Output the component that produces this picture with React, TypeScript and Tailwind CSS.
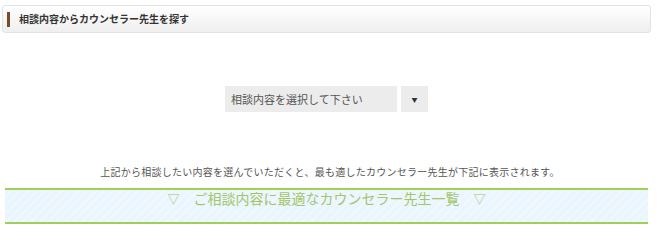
export default function App() {
  return (
    <div
      className="w-[660px] h-[240px] bg-white overflow-hidden"
      style={{ fontFamily: '"Noto Sans CJK JP", "Noto Sans", sans-serif' }}
    >
      <div className="ml-[2px] mt-[5px] flex h-[28px] w-[649px] items-center rounded-[3px] border border-[#e2e2e2] bg-gradient-to-b from-white to-[#efefef] pl-[4px]">
        <span className="h-[15px] w-[3px] bg-[#7b4b2a]" />
        <h2 className="ml-[9px] text-[10px] font-bold leading-none text-[#333]">
          相談内容からカウンセラー先生を探す
        </h2>
      </div>

      <div className="ml-[225px] mt-[53px] flex gap-[4px]">
        <div className="flex h-[26px] w-[172px] items-center bg-[#ececec] pl-[6px] text-[11px] text-[#555]">
          相談内容を選択して下さい
        </div>
        <button
          type="button"
          className="flex h-[26px] w-[27px] items-center justify-center bg-[#ececec] text-[6px] text-[#333]"
        >
          ▼
        </button>
      </div>

      <p className="mt-[53px] text-center text-[10px] leading-[14px] tracking-[0.25px] text-[#555]">
        上記から相談したい内容を選んでいただくと、最も適したカウンセラー先生が下記に表示されます。
      </p>

      <div className="ml-[5px] mt-[9px] h-[36px] w-[643px] border-y-2 border-[#a0d05a] bg-[#eaf5fe] bg-[repeating-linear-gradient(135deg,#eaf5fe_0px,#eaf5fe_4px,#f0f8ff_4px,#f0f8ff_6px)] text-center text-[14px] leading-[16px] text-[#a3c66a]">
        <span className="text-[12px]">▽</span>　ご相談内容に最適なカウンセラー先生一覧　<span className="text-[12px]">▽</span>
      </div>
    </div>
  )
}
